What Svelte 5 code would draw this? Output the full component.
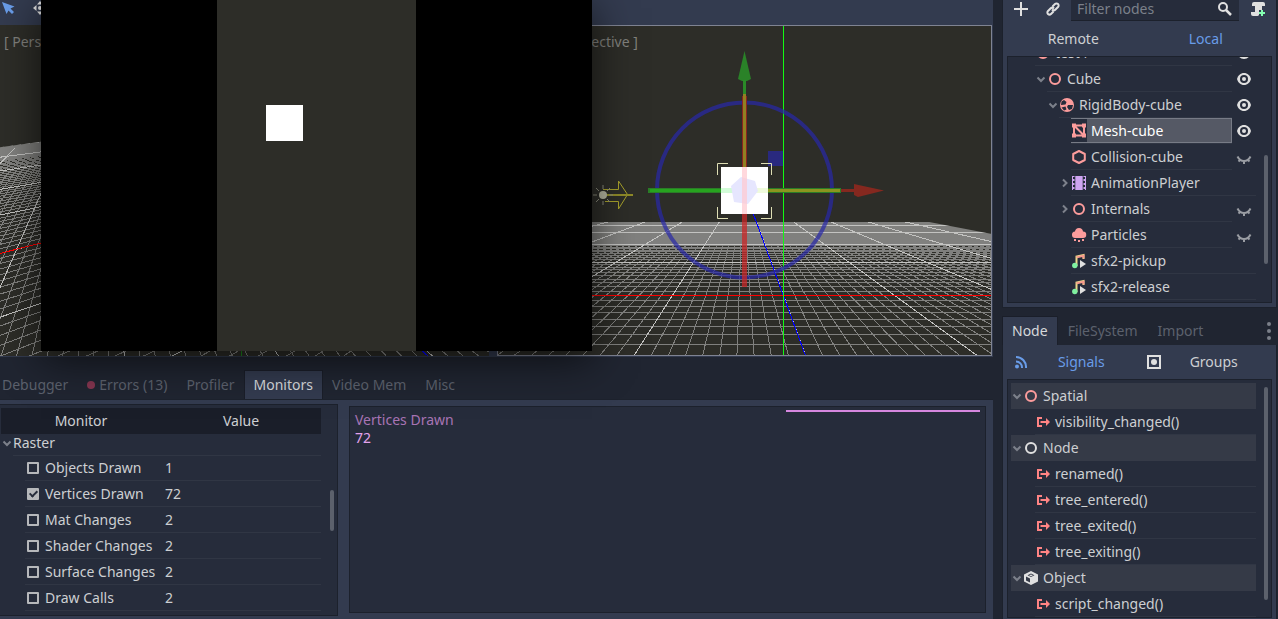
<script lang="ts">
  type IconName = 'spatial' | 'node' | 'rigid' | 'mesh' | 'collision' | 'anim' | 'particles' | 'audio' | 'object' | 'slot';

  interface SceneItem {
    name: string;
    icon: IconName;
    depth: number;
    arrow?: 'open' | 'closed';
    eye?: 'open' | 'closed';
  }

  interface Line {
    x1: number;
    y1: number;
    x2: number;
    y2: number;
    major: boolean;
  }

  const scene: SceneItem[] = [
    { name: 'test4', icon: 'spatial', depth: 0, eye: 'open' },
    { name: 'Cube', icon: 'spatial', depth: 1, arrow: 'open', eye: 'open' },
    { name: 'RigidBody-cube', icon: 'rigid', depth: 2, arrow: 'open', eye: 'open' },
    { name: 'Mesh-cube', icon: 'mesh', depth: 3, eye: 'open' },
    { name: 'Collision-cube', icon: 'collision', depth: 3, eye: 'closed' },
    { name: 'AnimationPlayer', icon: 'anim', depth: 3, arrow: 'closed' },
    { name: 'Internals', icon: 'spatial', depth: 3, arrow: 'closed', eye: 'closed' },
    { name: 'Particles', icon: 'particles', depth: 3, eye: 'closed' },
    { name: 'sfx2-pickup', icon: 'audio', depth: 3 },
    { name: 'sfx2-release', icon: 'audio', depth: 3 }
  ];

  const signalGroups: { name: string; icon: IconName; signals: string[] }[] = [
    { name: 'Spatial', icon: 'spatial', signals: ['visibility_changed()'] },
    { name: 'Node', icon: 'node', signals: ['renamed()', 'tree_entered()', 'tree_exited()', 'tree_exiting()'] },
    { name: 'Object', icon: 'object', signals: ['script_changed()'] }
  ];

  let monitors = $state([
    { name: 'Objects Drawn', value: 1, on: false },
    { name: 'Vertices Drawn', value: 72, on: true },
    { name: 'Mat Changes', value: 2, on: false },
    { name: 'Shader Changes', value: 2, on: false },
    { name: 'Surface Changes', value: 2, on: false },
    { name: 'Draw Calls', value: 2, on: false }
  ]);

  const debugTabs = ['Debugger', 'Errors (13)', 'Profiler', 'Monitors', 'Video Mem', 'Misc'];
  const dockTabs = ['Node', 'FileSystem', 'Import'];

  let selected = $state('Mesh-cube');
  let debugTab = $state('Monitors');
  let dockTab = $state('Node');
  let filter = $state('');

  // floor grid of the right view, vanishing point at (246, 160)
  function rightGrid(): Line[] {
    const lines: Line[] = [];
    for (let n = -45; n <= 8; n++) {
      const y = 160 + 1 / (0.009033 - 0.000394 * n);
      lines.push({ x1: 0, y1: y, x2: 495, y2: y, major: n % 10 === 0 });
    }
    for (let n = -90; n <= 46; n++) {
      const dx = (62 + 17 * n) / 169;
      lines.push({ x1: 246 + dx * 37, y1: 197, x2: 246 + dx * 172, y2: 332, major: n % 10 === 0 });
    }
    return lines.sort((a, b) => Number(a.major) - Number(b.major));
  }

  // floor grid of the left view, it is turned a little
  function leftGrid(): Line[] {
    const lines: Line[] = [];
    for (let n = -50; n <= 26; n++) {
      const y = 35 + 1 / (0.005168 - 0.000128 * n);
      lines.push({ x1: 0, y1: y + (y - 35) * 0.008, x2: 761, y2: 35, major: n % 10 === 0 });
    }
    for (let n = -90; n <= 60; n++) {
      const dx = (25 + 15.2 * n) / 292;
      const t = n < 0 ? 88 : 120;
      lines.push({ x1: 105 + dx * t, y1: 35 + t, x2: 105 + dx * 300, y2: 335, major: n % 10 === 0 });
    }
    return lines.sort((a, b) => Number(a.major) - Number(b.major));
  }

  const gridR = rightGrid();
  const gridL = leftGrid();
</script>

{#snippet icon(name: IconName)}
  <svg class="ico" viewBox="0 0 16 16" width="16" height="16" aria-hidden="true">
    {#if name === 'spatial'}
      <circle cx="8" cy="8" r="5" fill="none" stroke="#fc9c9c" stroke-width="2" />
    {:else if name === 'node'}
      <circle cx="8" cy="8" r="5" fill="none" stroke="#e0e0e0" stroke-width="2" />
    {:else if name === 'rigid'}
      <circle cx="8" cy="8" r="7" fill="#fc9c9c" />
      <path d="M2.500 4.500 5 3 7.500 5 6.500 7.500 2 8zM9 8h5l-1 4-3 1-2-3z" fill="#262c3b" />
      <path d="M2.500 10.500 6.500 9.500 7.500 12.500 5 13.500z" fill="#262c3b" />
    {:else if name === 'mesh'}
      <path d="M3 3h10v10H3zM3 3l10 10" fill="none" stroke="#fc9c9c" stroke-width="2" />
      <path d="M1 1h4v4H1zM11 1h4v4h-4zM1 11h4v4H1zM11 11h4v4h-4z" fill="#fc9c9c" />
    {:else if name === 'collision'}
      <path d="M8 2 13.800 5v6L8 14 2.200 11V5z" fill="none" stroke="#fc9c9c" stroke-width="2" stroke-linejoin="round" />
    {:else if name === 'anim'}
      <path d="M1 1h14v14H1z" fill="#cea4f1" />
      <path d="M2 2h1.500v2H2zM2 6h1.500v2H2zM2 10h1.500v2H2zM12.500 2H14v2h-1.500zM12.500 6H14v2h-1.500zM12.500 10H14v2h-1.500zM3.500 1h.8v14h-.8zM11.700 1h.8v14h-.8zM2 14h1.500v1H2zM12.500 14H14v1h-1.500z" fill="#262c3b" />
    {:else if name === 'particles'}
      <path d="M8 1a4 4 0 0 0-4 3.500A3 3 0 0 0 1 8a3 3 0 0 0 3 3h8a3 3 0 0 0 0-6.500A4 4 0 0 0 8 1zM3 12h2v2H3zM7 13h2v2H7zM11 12h2v2h-2z" fill="#fc9c9c" />
    {:else if name === 'audio'}
      <path d="M5.500 13V3.500L12.500 2v4" fill="none" stroke="#e9d88a" stroke-width="2" />
      <path d="M5 3.500 13.500 1.500v4h-2V4L6 5.200z" fill="#f7998d" />
      <circle cx="3.800" cy="12.500" r="2.700" fill="#7ff0a0" />
      <path d="M9 7v8l6-4z" fill="#e0e0e0" />
    {:else if name === 'object'}
      <path d="M8 1 15 4.500v7L8 15 1 11.500v-7z" fill="#e0e0e0" />
      <path d="M3 6.500 7 8.500v4L3 10.500zM8 3.500l3.500 1.700L8 7 4.500 5.200z" fill="#353a47" />
      <path d="M8 4.500 10 5.200 8 6.200 6 5.200z" fill="#e0e0e0" />
    {:else if name === 'slot'}
      <path d="M7 4H3v8h4" fill="none" stroke="#ff8484" stroke-width="2" />
      <path d="M5.500 7H11V4l4 4-4 4V9H5.500z" fill="#ff8484" />
    {/if}
  </svg>
{/snippet}

{#snippet chevron(closed: boolean)}
  <svg class="chev" viewBox="0 0 12 12" width="12" height="12" aria-hidden="true">
    {#if closed}
      <path d="M4 2.500 7.500 6 4 9.500" fill="none" stroke="#7d818b" stroke-width="2" />
    {:else}
      <path d="M2.500 4.500 6 8 9.500 4.500" fill="none" stroke="#7d818b" stroke-width="2" />
    {/if}
  </svg>
{/snippet}

{#snippet eye(closed: boolean)}
  <svg viewBox="0 0 16 16" width="16" height="16" aria-hidden="true">
    {#if closed}
      <path d="M1.500 7.500C3 10.500 5 12 8 12s5-1.500 6.500-4.500M8 12v3M4.500 10.500l-2 2M11.500 10.500l2 2" fill="none" stroke="#9a9da3" stroke-width="2" />
    {:else}
      <path d="M8 2C4.500 2 2 4.500 1 8c1 3.500 3.500 6 7 6s6-2.500 7-6c-1-3.500-3.500-6-7-6z" fill="#e0e0e0" />
      <circle cx="8" cy="8" r="4" fill="#262c3b" />
      <circle cx="8" cy="8" r="2" fill="#e0e0e0" />
    {/if}
  </svg>
{/snippet}

<div class="editor">
  <main class="left">
    <section class="views">
      <div class="toolbar">
        <button class="tool" aria-label="Select">
          <svg viewBox="0 0 16 16" width="16" height="16"><path d="M2 2 14.500 6.500 10.500 8.500 14 12 12 14 8.500 10.500 6.500 14z" fill="#699ce8" /></svg>
        </button>
        <button class="tool" aria-label="Move">
          <svg viewBox="0 0 16 16" width="16" height="16"><path d="M8 1 11 4.500H5zM8 15l3-3.500H5zM1 8l3.500-3v6zM15 8l-3.500-3v6z" fill="#e0e0e0" /><circle cx="8" cy="8" r="2" fill="#e0e0e0" /></svg>
        </button>
      </div>
      <div class="split">
        <div class="view">
          <svg class="world" viewBox="0 0 495 331" preserveAspectRatio="xMinYMin slice" aria-hidden="true">
            <path d="M0 123 60 115V129L0 137z" fill="#808080" />
            <g shape-rendering="crispEdges">
              {#each gridL as l}
                <line x1={l.x1} y1={l.y1} x2={l.x2} y2={l.y2} stroke={l.major ? '#c3c3c1' : '#80807e'} />
              {/each}
              <line x1="0" y1="230" x2="761" y2="35" stroke="#f00" />
              <line x1="247.500" y1="0" x2="247.500" y2="331" stroke="#1a8a1a" />
              <line x1="427" y1="325" x2="434" y2="331" stroke="#00f" />
            </g>
            <path d="M0 0H495V100L60 115 0 123z" fill="#2d2d28" />
          </svg>
          <button class="label">[ Perspective ]</button>
        </div>
        <div class="view active">
          <svg class="world" viewBox="0 0 495 331" preserveAspectRatio="xMinYMin slice" aria-hidden="true">
            <path d="M0 197H427L495 209V221H0z" fill="#808080" />
            <g shape-rendering="crispEdges">
              {#each gridR as l}
                <line x1={l.x1} y1={l.y1} x2={l.x2} y2={l.y2} stroke={l.major ? '#c3c3c1' : '#80807e'} />
              {/each}
            </g>
            <path d="M427 196V190H495V209z" fill="#2d2d28" />
            <g shape-rendering="crispEdges">
              <line x1="0" y1="270.500" x2="495" y2="270.500" stroke="#f00" />
              <line x1="256" y1="188" x2="309" y2="332" stroke="#00f" />
              <line x1="286.500" y1="0" x2="286.500" y2="331" stroke="#13f913" />
            </g>
            <circle cx="247.500" cy="165" r="87.500" fill="none" stroke="#2828a8" stroke-width="4" opacity="0.7" />
            <path d="M271 126h15v15h-15z" fill="#29297f" />
            <path d="M247.500 26 254 54 250 56h-5l-4-2z" fill="#2a8228" />
            <path d="M246 55h3v16h-3z" fill="#2a8a28" />
            <path d="M245 71h5v71h-5z" fill="#8a2420" />
            <path d="M246 69h3v73h-3z" fill="#918022" />
            <path d="M151 163h193v5H151z" fill="#2a7d27" />
            <path d="M153 164h71v3h-71z" fill="#27a31f" />
            <path d="M271 164h72v3h-72z" fill="#8c941f" />
            <path d="M344 164h15v3h-15zM357 159 387 165.500 361 172 357 170z" fill="#85281f" />
            <path d="M245 189h5v73h-5z" fill="#c82828" opacity="0.75" />
            <path d="M224 142h47v47h-47z" fill="#fff" />
            <path d="M224 163h23v5h-23z" fill="#d2fcd8" />
            <path d="M247 163h24v5h-24z" fill="#effbdc" />
            <path d="M244 152 258 156 261 166 251 179 237 177 234 161z" fill="#e6e6fe" />
            <path d="M245 142h5v47h-5z" fill="#ffc8ce" opacity="0.7" />
            <path d="M231 138.500h-10.500V150M264 138.500h10.500V150M231 193.500h-10.500V182M264 193.500h10.500V182" fill="none" stroke="#dedeb4" />
            <path d="M106 164.500H121.500V156L130.500 169.500 121.500 184V176.500H108" fill="none" stroke="#a7a12b" />
            <path d="M109 170h27" fill="none" stroke="#8f8a28" stroke-width="2" />
            <circle cx="106" cy="170" r="4" fill="#b5b5a0" />
            <path d="M106 160v4M106 176v4M96 170h4M112 170h4M99 163l3 3M113 163l-3 3M99 177l3-3M113 177l-3-3" stroke="#8c8c7c" fill="none" />
          </svg>
          <button class="label">[ Front Perspective ]</button>
        </div>
      </div>
    </section>

    <nav class="tabs debug-tabs">
      {#each debugTabs as t}
        <button class="tab" class:on={debugTab === t} onclick={() => (debugTab = t)}>
          {#if t.startsWith('Errors')}<i class="dot"></i>{/if}{t}
        </button>
      {/each}
    </nav>

    <section class="bottom">
      <div class="box monitor-box">
        <table>
          <thead>
            <tr><th>Monitor</th><th>Value</th></tr>
          </thead>
          <tbody>
            <tr class="group">
              <td colspan="2"><div class="cell-group">{@render chevron(false)}<span>Raster</span></div></td>
            </tr>
            {#each monitors as m}
              <tr>
                <td><label class="check"><input type="checkbox" bind:checked={m.on} />{m.name}</label></td>
                <td><div class="val">{m.value}</div></td>
              </tr>
            {/each}
          </tbody>
        </table>
        <div class="scroll"><div class="thumb short"></div></div>
      </div>
      <div class="box graph">
        <div class="legend">
          <div class="g-name">Vertices Drawn</div>
          <div class="g-val">72</div>
        </div>
        <div class="g-line"></div>
      </div>
    </section>

    <div class="game">
      <div class="stage"><div class="cube"></div></div>
    </div>
  </main>

  <aside class="right">
    <section class="panel scene">
      <div class="filter-row">
        <button class="tool" aria-label="Add node">
          <svg viewBox="0 0 16 16" width="16" height="16"><path d="M8 1v14M1 8h14" stroke="#e0e0e0" stroke-width="2" /></svg>
        </button>
        <button class="tool" aria-label="Instance scene">
          <svg viewBox="0 0 16 16" width="16" height="16" fill="none" stroke="#e0e0e0" stroke-width="2">
            <path d="M7.500 5.500 10 3a2.100 2.100 0 0 1 3 3l-2.500 2.500C9.500 9.500 8 9.500 7 8.500M8.500 10.500 6 13a2.100 2.100 0 0 1-3-3l2.500-2.500C6.500 6.500 8 6.500 9 7.500" />
          </svg>
        </button>
        <label class="search">
          <input type="text" placeholder="Filter nodes" aria-label="Filter nodes" bind:value={filter} />
          <svg viewBox="0 0 16 16" width="16" height="16"><circle cx="6" cy="6" r="4" fill="none" stroke="#e0e0e0" stroke-width="2" /><path d="M9 9l5 5" stroke="#e0e0e0" stroke-width="2.500" /></svg>
        </label>
        <button class="tool" aria-label="Attach script">
          <svg viewBox="0 0 16 16" width="16" height="16">
            <path d="M4 1h9a2 2 0 0 1 2 2v2h-3v4H9v5a2 2 0 0 1-2 1H3a2 2 0 0 1-2-2v-2h4V5H2V3a2 2 0 0 1 2-2z" fill="#e0e0e0" />
            <path d="M11 9h2v2h2v2h-2v2h-2v-2H9v-2h2z" fill="#84ffb1" />
          </svg>
        </button>
      </div>
      <div class="modes">
        <button>Remote</button>
        <button class="accent">Local</button>
      </div>
      <div class="box tree-box">
        <ul class="tree scene-tree">
          {#each scene as item}
            <li class="row" style="padding-left: {15 + item.depth * 12}px">
              <span class="arrow">{#if item.arrow}{@render chevron(item.arrow === 'closed')}{/if}</span>
              <button class="item" class:selected={selected === item.name} onclick={() => (selected = item.name)}>
                {@render icon(item.icon)}<span>{item.name}</span>
              </button>
              {#if item.eye}
                <button class="eye" aria-label="Toggle visibility">{@render eye(item.eye === 'closed')}</button>
              {/if}
            </li>
          {/each}
        </ul>
        <div class="scroll"><div class="thumb mid"></div></div>
      </div>
    </section>

    <nav class="tabs dock-tabs">
      {#each dockTabs as t}
        <button class="tab" class:on={dockTab === t} onclick={() => (dockTab = t)}>{t}</button>
      {/each}
      <button class="more" aria-label="Dock options"><i></i><i></i><i></i></button>
    </nav>

    <section class="panel node-dock">
      <div class="node-modes">
        <button class="accent">
          <svg viewBox="0 0 16 16" width="16" height="16" fill="none" stroke="#699ce8" stroke-width="2">
            <path d="M3 3a10 10 0 0 1 10 11M3 7.500A6 6 0 0 1 9 14" /><circle cx="4" cy="12.500" r="1" fill="#699ce8" />
          </svg>
          <span>Signals</span>
        </button>
        <button>
          <svg viewBox="0 0 16 16" width="16" height="16"><path d="M2 2h12v12H2z" fill="none" stroke="#e0e0e0" stroke-width="2" /><circle cx="8" cy="8" r="3" fill="#e0e0e0" /></svg>
          <span>Groups</span>
        </button>
      </div>
      <div class="box tree-box signal-box">
        <ul class="tree signal-tree">
          {#each signalGroups as g}
            <li class="row head">{@render chevron(false)}{@render icon(g.icon)}<span>{g.name}</span></li>
            {#each g.signals as s}
              <li class="row"><button class="item">{@render icon('slot')}<span>{s}</span></button></li>
            {/each}
          {/each}
        </ul>
        <div class="scroll"><div class="thumb long"></div></div>
      </div>
    </section>
  </aside>
</div>

<style>
  :global(body) {
    margin: 0;
    background: #202531;
  }
  .editor {
    display: grid;
    grid-template-columns: minmax(0, 1fr) 275px;
    gap: 10px;
    height: 100vh;
    overflow: hidden;
    box-sizing: border-box;
    font-family: "Noto Sans", sans-serif;
    font-size: 14px;
    line-height: 18px;
    color: #cdcfd2;
    background: #202531;
  }
  button {
    font: inherit;
    color: inherit;
    background: none;
    border: none;
    padding: 0;
    cursor: pointer;
    white-space: nowrap;
  }
  svg {
    display: block;
    flex: none;
  }
  ul {
    list-style: none;
    margin: 0;
    padding: 0;
  }
  .accent {
    color: #699ce8;
  }
  .left {
    position: relative;
    display: flex;
    flex-direction: column;
    min-width: 0;
    min-height: 0;
    overflow: hidden;
  }
  .views {
    flex: 1;
    min-height: 0;
    display: flex;
    flex-direction: column;
    background: #333b4f;
    padding-bottom: 1px;
    padding-right: 1px;
    margin-bottom: 14px;
  }
  .toolbar {
    display: flex;
    gap: 16px;
    height: 25px;
  }
  .tool {
    width: 16px;
    height: 16px;
  }
  .split {
    flex: 1;
    min-height: 0;
    display: grid;
    grid-template-columns: minmax(0, 1fr) minmax(0, 1fr);
    gap: 8px;
    margin-left: -6px;
  }
  .view {
    position: relative;
    overflow: hidden;
    background: #2d2d28;
  }
  .view.active::after {
    content: "";
    position: absolute;
    inset: 0;
    border: 1px solid #7f8392;
    pointer-events: none;
  }
  .world {
    width: 100%;
    height: 100%;
  }
  .label {
    position: absolute;
    top: 8px;
    left: 10px;
    color: #80807c;
  }
  .game {
    position: absolute;
    top: 0;
    left: 41px;
    width: 551px;
    height: 351px;
    display: flex;
    justify-content: center;
    background: #000;
    box-shadow: 0 8px 40px rgba(0, 0, 0, 0.65);
  }
  .stage {
    width: 199px;
    background: #2d2d28;
  }
  .cube {
    width: 37px;
    height: 36px;
    margin: 105px 0 0 49px;
    background: #fff;
  }
  .tabs {
    display: flex;
    height: 28px;
    color: #5c616d;
  }
  .tab {
    padding: 0 9px;
    display: flex;
    align-items: center;
  }
  .tab.on {
    background: #333b4f;
    color: #d6d8db;
    box-shadow: 0 0 0 1px #1a1e29;
    clip-path: inset(-1px -1px 0 -1px);
  }
  .debug-tabs {
    gap: 1px;
    margin-left: -7px;
  }
  .dot {
    width: 8px;
    height: 8px;
    margin-right: 4px;
    border-radius: 50%;
    background: #84354f;
  }
  .bottom {
    display: flex;
    gap: 11px;
    padding: 4px 7px 3px 0;
    background: #333b4f;
    border-top: 1px solid #1d222d;
  }
  .box {
    background: #262c3b;
    border: 1px solid #1c212c;
    box-sizing: border-box;
  }
  .monitor-box {
    display: flex;
    width: 338px;
    height: 212px;
    border-left: none;
    padding: 3px 0 0 1px;
    overflow: hidden;
  }
  table {
    width: 320px;
    height: 203px;
    table-layout: fixed;
    border-collapse: collapse;
  }
  th {
    height: 26px;
    padding: 0;
    font-weight: normal;
    background: #1a1e29;
  }
  td {
    padding: 0;
    height: 26px;
  }
  .group td {
    height: 21px;
  }
  .cell-group {
    display: flex;
    align-items: flex-start;
    height: 20px;
  }
  .cell-group .chev {
    margin-top: 2px;
  }
  .cell-group span {
    flex: 1;
    height: 20px;
    line-height: 16px;
    border-bottom: 1px solid #303644;
  }
  .check {
    display: flex;
    align-items: center;
    gap: 6px;
    height: 25px;
    margin-left: 24px;
    padding-left: 2px;
    border-bottom: 1px solid #303644;
    white-space: nowrap;
  }
  .check input {
    appearance: none;
    position: relative;
    width: 12px;
    height: 12px;
    margin: 0;
    border: 2px solid #b6b8bb;
    border-radius: 1px;
  }
  .check input:checked {
    background: #b6b8bb;
  }
  .check input:checked::after {
    content: "";
    position: absolute;
    left: 2px;
    top: -1px;
    width: 3px;
    height: 6px;
    border: solid #262c3b;
    border-width: 0 2px 2px 0;
    transform: rotate(45deg);
  }
  .val {
    height: 25px;
    line-height: 25px;
    padding-left: 4px;
    border-bottom: 1px solid #303644;
  }
  .scroll {
    width: 15px;
    flex: none;
    display: flex;
    justify-content: center;
    align-items: flex-start;
  }
  .thumb {
    width: 4px;
    border-radius: 2px;
    background: #5c616c;
  }
  .thumb.short {
    height: 41px;
    margin-top: 82px;
    margin-left: 7px;
  }
  .thumb.mid {
    height: 109px;
    margin-top: 98px;
    margin-left: 5px;
  }
  .thumb.long {
    height: 213px;
    margin-top: 7px;
    margin-left: 5px;
  }
  .graph {
    flex: 1;
    display: flex;
    justify-content: space-between;
    margin-top: 2px;
    margin-bottom: 3px;
    padding: 3px 5px;
  }
  .legend {
    padding-top: 1px;
  }
  .g-name {
    color: #a874b4;
  }
  .g-val {
    color: #e3a3ec;
  }
  .g-line {
    width: 31%;
    height: 2px;
    background: #d687df;
  }
  .right {
    display: flex;
    flex-direction: column;
    min-height: 0;
    padding-right: 2px;
  }
  .panel {
    background: #333b4f;
    padding: 0 4px;
    box-shadow: 0 0 0 1px #1c212c;
  }
  .scene {
    padding-bottom: 4px;
  }
  .filter-row {
    display: flex;
    align-items: flex-start;
    height: 21px;
    padding: 0 6px;
  }
  .filter-row .tool {
    margin-top: 1px;
  }
  .filter-row .tool:nth-child(2) {
    margin-left: 16px;
  }
  .search {
    flex: 1;
    min-width: 0;
    display: flex;
    height: 21px;
    margin: 0 11px 0 10px;
    padding: 0 6px;
    background: #262c3b;
    border-bottom: 1px solid #1c212c;
    box-sizing: border-box;
  }
  .search svg {
    margin-top: 1px;
  }
  .search input {
    flex: 1;
    min-width: 0;
    height: 18px;
    padding: 0;
    border: none;
    outline: none;
    background: none;
    font: inherit;
    color: inherit;
  }
  .search input::placeholder {
    color: #7b808a;
    opacity: 1;
  }
  .modes {
    display: grid;
    grid-template-columns: 1fr 1fr;
    height: 35px;
  }
  .tree-box {
    display: flex;
    overflow: hidden;
  }
  .tree {
    flex: 1;
    min-width: 0;
  }
  .scene-tree {
    margin-top: -17px;
    padding-bottom: 2px;
  }
  .row {
    display: flex;
    height: 26px;
  }
  .arrow {
    width: 12px;
    flex: none;
    display: flex;
    align-items: center;
  }
  .item {
    flex: 1;
    display: flex;
    align-items: center;
    gap: 4px;
    text-align: left;
    border-bottom: 1px solid #303644;
  }
  .item.selected {
    background: #555965;
    color: #fff;
    box-shadow: inset 0 0 0 1px #777b86;
  }
  .item.selected .ico {
    background: #262c3b;
    height: 23px;
  }
  .eye {
    width: 24px;
    display: flex;
    justify-content: center;
    align-items: center;
  }
  .dock-tabs {
    margin-top: 10px;
  }
  .more {
    margin-left: auto;
    width: 15px;
    display: flex;
    flex-direction: column;
    align-items: center;
    justify-content: center;
    gap: 3px;
  }
  .more i {
    width: 4px;
    height: 4px;
    border-radius: 50%;
    background: #7b808a;
  }
  .dock-tabs .tab:nth-child(2) {
    padding-left: 11px;
  }
  .dock-tabs .tab:nth-child(3) {
    padding-left: 11px;
  }
  .node-dock {
    flex: 1;
    min-height: 0;
    display: flex;
    flex-direction: column;
    clip-path: inset(0 -1px 0 -1px);
    padding-bottom: 1px;
  }
  .node-modes {
    display: grid;
    grid-template-columns: 1fr 1fr;
    height: 34px;
  }
  .node-modes button {
    display: flex;
    align-items: center;
    padding: 0 6px;
  }
  .node-modes span {
    flex: 1;
    text-align: center;
  }
  .signal-box {
    flex: 1;
    min-height: 0;
  }
  .signal-tree {
    padding: 3px 0 0 3px;
  }
  .signal-tree .item {
    margin-left: 24px;
  }
  .head {
    align-items: center;
    background: #353a47;
  }
  .head .ico {
    margin-right: 4px;
  }
</style>
